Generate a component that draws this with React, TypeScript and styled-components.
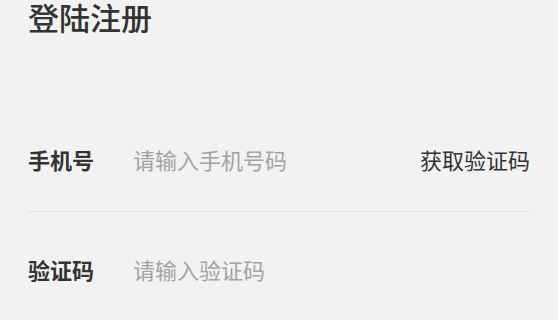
import React from "react";
import styled, { createGlobalStyle } from "styled-components";

const GlobalStyle = createGlobalStyle`
  html, body {
    margin: 0;
    padding: 0;
    background: #f2f2f2;
  }
  body {
    font-family: "Noto Sans CJK SC", "Noto Sans", sans-serif;
    color: #333333;
  }
`;

const Page = styled.div`
  padding: 0 28px;
  min-height: 320px;
  box-sizing: border-box;
`;

const Title = styled.h1`
  margin: 0;
  padding-top: 1px;
  font-size: 31px;
  line-height: 31px;
  font-weight: 500;
  color: #333333;
`;

const Form = styled.form`
  margin-top: 77px;
  display: flex;
  flex-direction: column;
`;

const Row = styled.label<{ $divider?: boolean; $offset?: number }>`
  display: flex;
  align-items: center;
  height: ${({ $divider }) => ($divider ? 103 : 100)}px;
  padding-bottom: ${({ $divider }) => ($divider ? 3 : 0)}px;
  box-sizing: border-box;
  margin-top: ${({ $offset }) => $offset ?? 0}px;
  border-bottom: 1px solid ${({ $divider }) => ($divider ? "#e3e3e3" : "transparent")};
`;

const Label = styled.span`
  flex: 0 0 105px;
  font-size: 22px;
  line-height: 30px;
  font-weight: 700;
  color: #333333;
`;

const Field = styled.input`
  flex: 1;
  min-width: 0;
  border: none;
  outline: none;
  background: transparent;
  padding: 0;
  font-family: inherit;
  font-size: 22px;
  line-height: 30px;
  color: #333333;

  &::placeholder {
    color: #a3a3a3;
  }
`;

const CodeButton = styled.button`
  border: none;
  background: transparent;
  padding: 0;
  font-family: inherit;
  font-size: 22px;
  line-height: 30px;
  color: #333333;
  cursor: pointer;
`;

export default function App() {
  return (
    <>
      <GlobalStyle />
      <Page>
        <Title>登陆注册</Title>
        <Form onSubmit={(e) => e.preventDefault()}>
          <Row $divider>
            <Label>手机号</Label>
            <Field type="tel" placeholder="请输入手机号码" />
            <CodeButton type="button">获取验证码</CodeButton>
          </Row>
          <Row $offset={7}>
            <Label>验证码</Label>
            <Field type="text" placeholder="请输入验证码" />
          </Row>
        </Form>
      </Page>
    </>
  );
}
